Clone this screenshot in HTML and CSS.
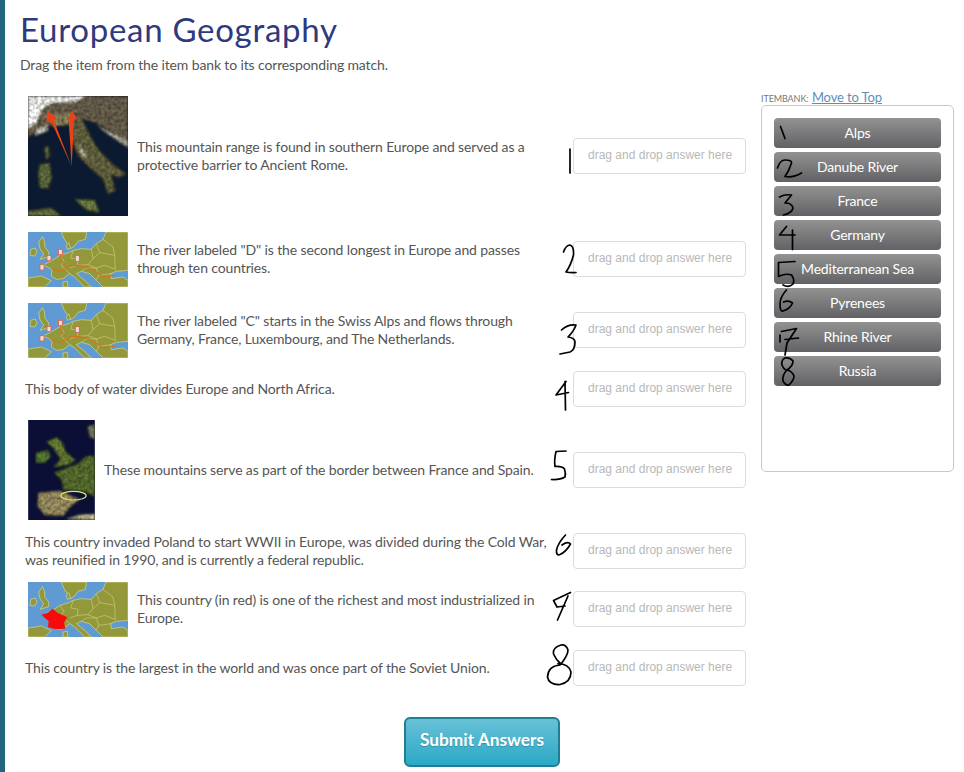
FILE: index.html
```html
<!DOCTYPE html>
<html lang="en">
<head>
<meta charset="utf-8">
<title>European Geography</title>
<link rel="stylesheet" href="styles.css">
</head>
<body>
<svg class="defs" width="0" height="0" aria-hidden="true">
  <defs>
    <filter id="soft" x="-5%" y="-5%" width="110%" height="110%"><feGaussianBlur stdDeviation="1.3"/></filter>
    <filter id="terrain" x="0" y="0" width="100%" height="100%" color-interpolation-filters="sRGB">
      <feGaussianBlur in="SourceGraphic" stdDeviation="2.8" result="base"/>
      <feTurbulence type="fractalNoise" baseFrequency="0.1" numOctaves="3" seed="4" result="grain"/>
      <feColorMatrix in="grain" type="matrix" values="1 0 0 0 0 1 0 0 0 0 1 0 0 0 0 0 0 0 0 1" result="grey"/>
      <feComposite in="base" in2="grey" operator="arithmetic" k1="0.8" k2="0.6" k3="0" k4="0"/>
    </filter>
    <symbol id="europe" viewBox="0 0 300 165">
      <rect width="300" height="165" fill="#5f9bd2"/>
      <g filter="url(#soft)">
        <g fill="#93993a" stroke="#d9d88e" stroke-width="2">
          <path d="M8 52 L22 48 L27 60 L20 72 L6 70 Z"/>
          <path d="M32 30 L44 14 L50 30 L50 44 L62 60 L62 74 L36 82 L47 66 L36 50 Z"/>
          <path d="M100 0 L108 20 L128 50 L140 42 L150 28 L172 22 L176 0 Z"/>
          <path d="M115 40 L122 32 L128 48 L118 52 Z"/>
          <path d="M42 100 L60 92 L78 82 L96 70 L122 62 L136 55 L160 50 L190 52 L205 35 L225 22 L234 0 L300 0 L300 115 L265 118 L248 125 L250 140 L285 135 L300 145 L300 165 L225 165 L205 145 L185 125 L160 118 L145 125 L170 145 L190 165 L170 165 L140 135 L125 125 L105 140 L85 142 L70 132 L72 115 L60 105 Z"/>
          <path d="M0 138 L40 132 L70 146 L50 165 L0 165 Z"/>
          <path d="M105 150 L118 148 L120 165 L105 165 Z"/>
        </g>
        <g fill="none" stroke="#d9d88e" stroke-width="1.6">
          <path d="M96 70 L108 88 L100 100 L125 125"/>
          <path d="M136 55 L128 78 L150 82 L148 100 L125 108"/>
          <path d="M148 100 L180 98 L205 108 L230 100 L262 112"/>
          <path d="M190 52 L195 80 L180 98"/>
          <path d="M205 35 L215 62 L195 80"/>
          <path d="M215 62 L260 70 L262 112"/>
          <path d="M160 118 L175 108 L205 108 L212 130 L205 145"/>
          <path d="M212 130 L250 125"/>
          <path d="M225 22 L255 45 L260 70"/>
        </g>
      </g>
    </symbol>
    <symbol id="rivers" viewBox="0 0 300 165">
      <use href="#europe"/>
      <g fill="none" stroke="#d8701e" stroke-width="3.4" filter="url(#soft)">
        <path d="M72 112 L100 118 L125 102 L150 100 L175 105 L205 120 L225 135 L262 130"/>
        <path d="M97 65 L100 85 L112 100"/>
      </g>
      <g fill="#f3dcd6" stroke="#d8604e" stroke-width="2.5" filter="url(#soft)">
        <rect x="57" y="70" width="12" height="16"/>
        <rect x="91" y="52" width="12" height="16"/>
        <rect x="142" y="71" width="12" height="17"/>
        <rect x="36" y="98" width="12" height="16"/>
      </g>
    </symbol>
  </defs>
</svg>

<svg class="ink" viewBox="0 0 964 772" aria-hidden="true">
  <g fill="none" stroke="#000" stroke-width="1.7" stroke-linecap="round" stroke-linejoin="round">
    <path d="M570 149 L570 173"/>
    <path d="M563.5 252 Q566 245 570 245 Q574 246 573.5 255 Q571 265 566 272 Q571 273 576 272.5"/>
    <path d="M561.5 330 Q568 324 576 325 Q574 331 568 337 Q575 338 575 342 Q575 350 570 352 L560 354"/>
    <path d="M566 381.5 L556 395 L568.5 392.5 M565 381.5 L565.5 410"/>
    <path d="M566 451 L556 451.5 Q554 460 555 466.5 Q562 466 564.5 469 Q566 474 565 477 Q560 480 551.5 479.5"/>
    <path d="M565.5 535 Q558 543 556.5 550 Q556 556 560 554.5 Q566 552 570.5 544 Q568 541 562 545"/>
    <path d="M570.5 592.5 L553.5 600.5 L557 607 M568 596 L557.5 620 M557 607 L565 606"/>
    <path d="M561 645 Q552 648 553.5 654 Q556 660 561 664 Q568 655 568 650 Q566 644 561 645 M560 665 Q548 666 547.5 677 Q549 685 560 684.5 Q571 682 571 672 Q569 664 558 663.5"/>

    <path d="M780.5 126.5 L785 138.5"/>
    <path d="M777.5 168 Q780 160 785 160 Q792 160 791.5 163 Q789 171 785 176.5 Q793 178 801.5 173"/>
    <path d="M779.5 197 Q785 194 791.5 195 L785 203 Q792 203 793 208 Q792 213 783.5 215"/>
    <path d="M786.5 226.5 L779.5 235 L795 235 M792.5 230 L792.5 249.5"/>
    <path d="M795 261.5 L778.5 262.5 L778.5 276.5 Q786 273 791.5 275 Q795 280 793 284 Q789 288 783 285"/>
    <path d="M786.5 290 Q780 297 780 304 Q780 312 783 311 Q790 309 792.5 303 Q789 300 783.5 302"/>
    <path d="M780 335 L780 342 M781.5 331.5 L796.5 328.5 L787 343 L785 355 M785 339.5 L798.5 338"/>
    <path d="M785 358 Q781 360 782 365 Q784 370 787 370 Q793 366 793 361 Q790 357 785 358 M787 370 Q782 375 783 381 Q786 386 789 385 Q794 380 794 376 Q792 371 787 370"/>
  </g>
</svg>

<div class="page">
  <div class="stripe"></div>
  <main class="content">
    <h1 class="title">European Geography</h1>
    <p class="lede">Drag the item from the item bank to its corresponding match.</p>

    <div class="quiz">
      <div class="questions">
        <div class="row row-spaced">
          <div class="prompt">
            <svg class="pic pic-alps" viewBox="0 0 300 360" aria-hidden="true">
              <rect width="300" height="360" fill="#0b1a30"/>
              <g filter="url(#terrain)">
                <path d="M0 0 H300 V150 L255 112 L205 82 L165 70 L150 95 L120 85 L60 90 L40 95 L0 125 Z" fill="#5e5645"/>
                <path d="M0 0 H175 L140 18 L75 20 L45 36 L25 80 L0 100 Z" fill="#dcdcd8"/>
                <path d="M0 20 L30 40 L10 90 L0 92 Z" fill="#f4f4f2"/>
                <path d="M25 100 L60 88 L60 105 L20 120 Z" fill="#b4b4aa"/>
                <path d="M45 55 L130 50 L135 85 L75 92 Z" fill="#7a7450"/>
                <path d="M125 85 L165 75 L190 125 L215 165 L255 205 L295 235 L270 245 L250 235 L262 285 L240 295 L225 250 L185 215 L150 180 L130 130 Z" fill="#5a5a3a"/>
                <path d="M150 135 L172 180 L185 190 L160 178 Z" fill="#c8c5b2"/>
                <path d="M205 88 L300 135 V155 L240 115 Z" fill="#a5a294"/>
                <path d="M48 155 L62 150 L66 180 L55 192 Z" fill="#56603a"/>
                <path d="M35 205 L65 200 L72 245 L60 278 L35 275 L30 235 Z" fill="#56613a"/>
                <path d="M140 310 L200 312 L215 350 L175 342 Z" fill="#65723e"/>
                <path d="M0 345 L70 335 L100 360 H0 Z" fill="#5c683a"/>
              </g>
              <path d="M131 212 L72 82 L55 76 L58 46 L84 62 L78 74 Z" fill="#e8421a"/>
              <path d="M131 212 L122 72 L118 72 L132 44 L147 68 L138 72 Z" fill="#e8421a"/>
            </svg>
            <span class="text">This mountain range is found in southern Europe and served as a protective barrier to Ancient Rome.</span>
          </div>
          <div class="slot">drag and drop answer here</div>
        </div>

        <div class="row row-spaced row-map">
          <div class="prompt">
            <svg class="pic pic-map" viewBox="0 0 300 165" aria-hidden="true"><use href="#rivers"/></svg>
            <span class="text">The river labeled "D" is the second longest in Europe and passes through ten countries.</span>
          </div>
          <div class="slot">drag and drop answer here</div>
        </div>

        <div class="row row-map">
          <div class="prompt">
            <svg class="pic pic-map" viewBox="0 0 300 165" aria-hidden="true"><use href="#rivers"/></svg>
            <span class="text">The river labeled "C" starts in the Swiss Alps and flows through Germany, France, Luxembourg, and The Netherlands.</span>
          </div>
          <div class="slot">drag and drop answer here</div>
        </div>

        <div class="row">
          <div class="prompt">
            <span class="text">This body of water divides Europe and North Africa.</span>
          </div>
          <div class="slot">drag and drop answer here</div>
        </div>

        <div class="row">
          <div class="prompt">
            <svg class="pic pic-iberia" viewBox="0 0 200 300" aria-hidden="true">
              <rect width="200" height="300" fill="#0b0f36"/>
              <g filter="url(#terrain)">
                <path d="M22 100 L60 90 L68 110 L50 128 L24 128 Z" fill="#4f7230"/>
                <path d="M55 65 L85 52 L105 70 L112 95 L142 120 L120 135 L75 142 L98 118 L75 85 Z" fill="#5c7030"/>
                <path d="M78 158 L150 130 L175 108 H200 V230 L170 215 L105 210 L100 180 Z" fill="#4f632a"/>
                <path d="M30 218 L95 212 L155 238 L125 262 L105 288 L50 285 L28 258 Z" fill="#8c8158"/>
                <path d="M112 298 L155 284 L200 282 V300 Z" fill="#b4ae8a"/>
                <path d="M178 20 L200 12 V58 L185 52 Z" fill="#6b7158"/>
              </g>
              <ellipse cx="136" cy="227" rx="38" ry="13" fill="none" stroke="#e0e36a" stroke-width="3.5"/>
            </svg>
            <span class="text">These mountains serve as part of the border between France and Spain.</span>
          </div>
          <div class="slot">drag and drop answer here</div>
        </div>

        <div class="row">
          <div class="prompt">
            <span class="text">This country invaded Poland to start WWII in Europe, was divided during the Cold War, was reunified in 1990, and is currently a federal republic.</span>
          </div>
          <div class="slot">drag and drop answer here</div>
        </div>

        <div class="row row-map">
          <div class="prompt">
            <svg class="pic pic-map" viewBox="0 0 300 165" aria-hidden="true">
              <use href="#europe"/>
              <path d="M40 98 L60 92 L74 80 L88 92 L118 106 L108 122 L112 140 L84 142 L60 136 L62 118 Z" fill="#f60a0a"/>
            </svg>
            <span class="text">This country (in red) is one of the richest and most industrialized in Europe.</span>
          </div>
          <div class="slot">drag and drop answer here</div>
        </div>

        <div class="row">
          <div class="prompt">
            <span class="text">This country is the largest in the world and was once part of the Soviet Union.</span>
          </div>
          <div class="slot">drag and drop answer here</div>
        </div>
      </div>

      <aside class="bank-col">
        <div class="bank-head"><span class="bank-label">ITEMBANK:</span> <a class="bank-link" href="#">Move to Top</a></div>
        <div class="bank">
          <div class="item">Alps</div>
          <div class="item">Danube River</div>
          <div class="item">France</div>
          <div class="item">Germany</div>
          <div class="item">Mediterranean Sea</div>
          <div class="item">Pyrenees</div>
          <div class="item">Rhine River</div>
          <div class="item">Russia</div>
        </div>
      </aside>
    </div>

    <div class="actions">
      <button class="submit" type="button">Submit Answers</button>
    </div>
  </main>
</div>
</body>
</html>
```

FILE: styles.css
```css
* { box-sizing: border-box; }

html, body {
  margin: 0;
  height: 100%;
  background: #fff;
  overflow: hidden;
}

body {
  font-family: "Lato", "Liberation Sans", sans-serif;
  font-size: 14px;
  letter-spacing: -0.13px;
  color: #555;
}

.defs { position: absolute; }

.ink {
  position: absolute;
  top: 0;
  left: 0;
  width: 964px;
  height: 772px;
  z-index: 2;
  pointer-events: none;
}

.page {
  display: flex;
  height: 772px;
}

.stripe {
  flex: 0 0 5px;
  background: #22647a;
}

.content {
  flex: 1;
  min-width: 0;
  padding: 0 10px 0 15px;
}

.title {
  margin: 0;
  padding-top: 9px;
  height: 52px;
  font-size: 33px;
  line-height: 40px;
  letter-spacing: 0.72px;
  font-weight: 400;
  color: #2f3a7e;
}

.lede {
  margin: 0;
  height: 44px;
  padding-top: 4px;
  line-height: 18px;
  font-size: 14px;
}

.quiz {
  display: flex;
  gap: 15px;
  align-items: flex-start;
}

.questions {
  flex: 0 0 726px;
  padding-left: 5px;
  display: flex;
  flex-direction: column;
  gap: 13px;
}

.row {
  display: grid;
  grid-template-columns: 1fr 173px;
  column-gap: 18px;
  align-items: center;
}

.row-spaced { margin-bottom: 3px; }

.row-map .slot { margin-bottom: 1px; }

.prompt {
  display: flex;
  align-items: center;
}

.text {
  display: block;
  line-height: 18px;
  margin-top: -1px;
}

.pic {
  display: block;
  flex: none;
  margin: 0 9px 0 3px;
}

.pic-alps { width: 100px; height: 120px; }
.pic-map { width: 100px; height: 55px; }
.pic-iberia { width: 67px; height: 100px; }

.slot {
  height: 36px;
  padding-left: 14px;
  border: 1px solid #dcdcdc;
  border-radius: 4px;
  background: #fff;
  font-family: "Liberation Sans", Arial, sans-serif;
  font-size: 12px;
  letter-spacing: 0;
  line-height: 32px;
  color: #b8b8b8;
}

.bank-col {
  flex: 0 0 193px;
  margin-top: -6px;
}

.bank-head {
  height: 15px;
  line-height: 13px;
  white-space: nowrap;
}

.bank-label {
  font-size: 9px;
  letter-spacing: -0.1px;
  color: #777;
}

.bank-link {
  font-size: 13px;
  color: #5b8fb8;
  text-decoration: underline;
}

.bank {
  height: 367px;
  padding: 12px;
  border: 1px solid #c8c8c8;
  border-radius: 5px;
  display: flex;
  flex-direction: column;
  gap: 4px;
}

.item {
  height: 30px;
  border-radius: 4px;
  background: linear-gradient(#929292, #626266);
  color: #fff;
  text-align: center;
  line-height: 30px;
  letter-spacing: -0.2px;
  font-size: 14px;
}

.actions {
  display: flex;
  justify-content: center;
  padding-right: 10px;
  margin-top: 31px;
}

.submit {
  width: 156px;
  height: 50px;
  padding: 0 0 5px;
  border: 2px solid #1f7d94;
  border-radius: 6px;
  background: linear-gradient(#68c1d7, #2ba9c6);
  color: #fff;
  font-family: "Lato", "Liberation Sans", sans-serif;
  font-size: 17.3px;
  font-weight: 700;
  text-shadow: 0 1px 1px rgba(0, 0, 0, 0.2);
}
```
